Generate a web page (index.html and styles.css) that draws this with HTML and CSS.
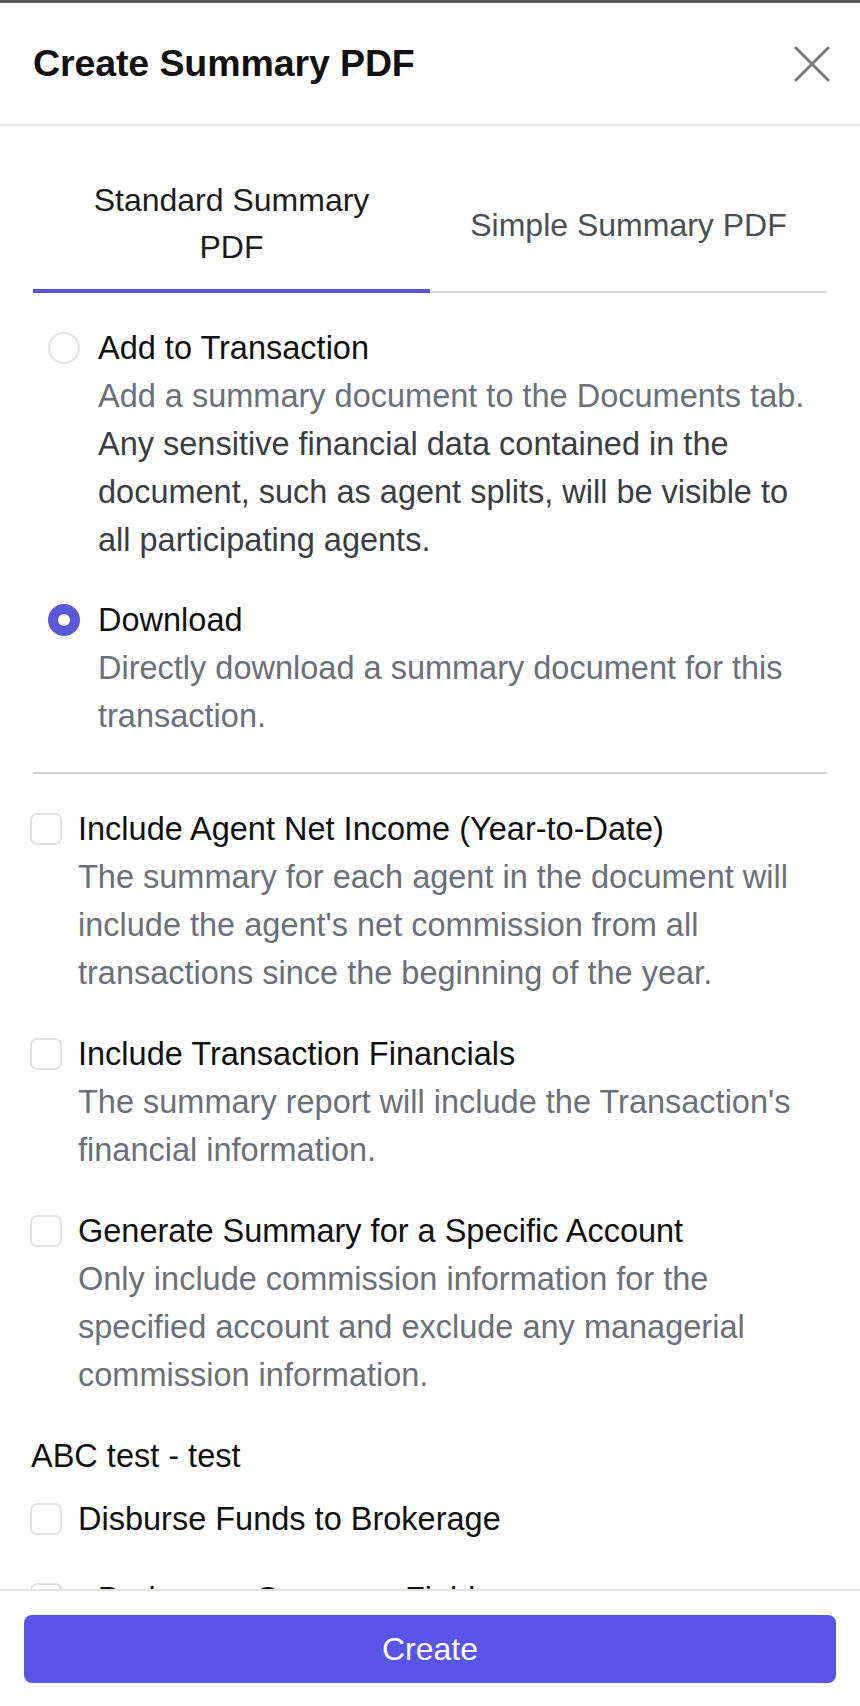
FILE: index.html
```html
<!DOCTYPE html>
<html lang="en">
<head>
    <meta charset="UTF-8">
    <meta name="viewport" content="width=device-width, initial-scale=1.0">
    <title>Create Summary PDF</title>
    <link rel="stylesheet" href="styles.css">
</head>
<body>
    <div class="modal">
        <header class="modal-header">
            <h1>Create Summary PDF</h1>
            <button class="close-btn" aria-label="Close">
                <svg width="36" height="36" viewBox="0 0 36 36">
                    <path d="M2 2 L34 34 M34 2 L2 34" stroke="#7a7a7a" stroke-width="3" stroke-linecap="round" fill="none"/>
                </svg>
            </button>
        </header>

        <main class="modal-body">
            <div class="tabs">
                <div class="tab active">Standard Summary PDF</div>
                <div class="tab">Simple Summary PDF</div>
            </div>

            <div class="radio-group">
                <label class="option">
                    <span class="radio"></span>
                    <span class="option-text">
                        <span class="option-title">Add to Transaction</span>
                        <span class="option-desc">Add a summary document to the Documents tab.</span>
                        <span class="option-note">Any sensitive financial data contained in the document, such as agent splits, will be visible to all participating agents.</span>
                    </span>
                </label>
                <label class="option">
                    <span class="radio checked"></span>
                    <span class="option-text">
                        <span class="option-title">Download</span>
                        <span class="option-desc">Directly download a summary document for this transaction.</span>
                    </span>
                </label>
            </div>

            <hr class="divider">

            <div class="check-list">
                <label class="option check">
                    <span class="checkbox"></span>
                    <span class="option-text">
                        <span class="option-title">Include Agent Net Income (Year-to-Date)</span>
                        <span class="option-desc">The summary for each agent in the document will include the agent's net commission from all transactions since the beginning of the year.</span>
                    </span>
                </label>
                <label class="option check">
                    <span class="checkbox"></span>
                    <span class="option-text">
                        <span class="option-title">Include Transaction Financials</span>
                        <span class="option-desc">The summary report will include the Transaction's financial information.</span>
                    </span>
                </label>
                <label class="option check">
                    <span class="checkbox"></span>
                    <span class="option-text">
                        <span class="option-title">Generate Summary for a Specific Account</span>
                        <span class="option-desc">Only include commission information for the specified account and exclude any managerial commission information.</span>
                    </span>
                </label>
            </div>

            <div class="group-title">ABC test - test</div>

            <div class="check-list tight">
                <label class="option check">
                    <span class="checkbox"></span>
                    <span class="option-text">
                        <span class="option-title">Disburse Funds to Brokerage</span>
                    </span>
                </label>
                <label class="option check">
                    <span class="checkbox"></span>
                    <span class="option-text">
                        <span class="option-title">- Brokerage Summary Fields</span>
                    </span>
                </label>
            </div>
        </main>

        <footer class="modal-footer">
            <button class="create-btn">Create</button>
        </footer>
    </div>
</body>
</html>
```

FILE: styles.css
```css
* {
    box-sizing: border-box;
}
body {
    margin: 0;
    padding: 0;
    font-family: "Liberation Sans", Arial, sans-serif;
    background-color: #fff;
    color: #111;
}
.modal {
    height: 100vh;
    display: flex;
    flex-direction: column;
    border-top: 3px solid #5c5c5c;
    background-color: #fff;
}
.modal-header {
    height: 123px;
    flex-shrink: 0;
    display: flex;
    align-items: center;
    justify-content: space-between;
    padding: 0 30px 0 33px;
    border-bottom: 2px solid #e6e6e6;
}
.modal-header h1 {
    margin: 0;
    font-size: 37.5px;
    font-weight: bold;
    color: #111;
    letter-spacing: -0.1px;
}
.close-btn {
    background: none;
    border: none;
    padding: 0;
    width: 36px;
    height: 36px;
    display: flex;
    cursor: pointer;
}
.modal-body {
    flex: 1;
    overflow: hidden;
    padding: 0 33px;
    font-size: 32.5px;
    line-height: 48px;
}
.tabs {
    display: flex;
}
.tab {
    flex: 1;
    display: flex;
    align-items: center;
    justify-content: center;
    text-align: center;
    padding: 51px 40px 18px;
    font-size: 32px;
    line-height: 47px;
    color: #4a4f55;
    border-bottom: 2px solid #d6d6d6;
}
.tab.active {
    color: #1c1c1c;
    border-bottom: 4px solid #5855d6;
}
.radio-group {
    display: flex;
    flex-direction: column;
    gap: 32px;
    padding: 31px 10px 0 15px;
}
.option {
    display: flex;
    gap: 18px;
    cursor: pointer;
}
.option-text {
    display: flex;
    flex-direction: column;
    min-width: 0;
}
.option-title {
    color: #111;
}
.option-desc {
    color: #6b7078;
}
.option-note {
    color: #3a3d42;
}
.radio {
    flex-shrink: 0;
    width: 32px;
    height: 32px;
    margin-top: 8px;
    border: 2px solid #e2e2e2;
    border-radius: 50%;
}
.radio.checked {
    border: 10px solid #5b58dc;
    background-color: #fff;
}
.divider {
    margin: 32px 0 0;
    border: none;
    border-top: 2px solid #d2d2d2;
}
.check-list {
    display: flex;
    flex-direction: column;
    gap: 33px;
    padding-top: 31px;
}
.check-list.tight {
    padding-top: 15px;
    gap: 32px;
}
.option.check {
    gap: 16px;
}
.checkbox {
    flex-shrink: 0;
    width: 32px;
    height: 32px;
    margin: 8px 0 0 -3px;
    border: 2px solid #e0e0e0;
    border-radius: 7px;
}
.group-title {
    margin-top: 33px;
    margin-left: -2px;
    color: #111;
}
.modal-footer {
    flex-shrink: 0;
    padding: 24px 24px 23px;
    border-top: 2px solid #e2e2e2;
    background-color: #fff;
}
.create-btn {
    display: block;
    width: 100%;
    height: 68px;
    border: none;
    border-radius: 8px;
    background-color: #5a55e8;
    color: #fff;
    font-family: "Liberation Sans", Arial, sans-serif;
    font-size: 32px;
    cursor: pointer;
}
```
